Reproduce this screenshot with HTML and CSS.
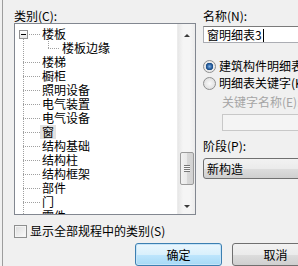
FILE: index.html
```html
<!DOCTYPE html>
<html lang="zh-CN">
<head>
    <meta charset="UTF-8">
    <meta name="viewport" content="width=device-width, initial-scale=1.0">
    <title>新建明细表</title>
    <link rel="stylesheet" href="styles.css">
</head>
<body>
    <div class="dialog">
        <div class="top">
            <div class="col-left">
                <div class="label">类别(C):</div>
                <div class="listbox">
                    <div class="tree">
                        <div class="node"><span class="conn root"><span class="expander"></span></span><span class="text">楼板</span></div>
                        <div class="node"><span class="conn pass"></span><span class="conn sub"></span><span class="text">楼板边缘</span></div>
                        <div class="node"><span class="conn"></span><span class="text">楼梯</span></div>
                        <div class="node"><span class="conn"></span><span class="text">橱柜</span></div>
                        <div class="node"><span class="conn"></span><span class="text">照明设备</span></div>
                        <div class="node"><span class="conn"></span><span class="text">电气装置</span></div>
                        <div class="node"><span class="conn"></span><span class="text">电气设备</span></div>
                        <div class="node"><span class="conn"></span><span class="text selected">窗</span></div>
                        <div class="node"><span class="conn"></span><span class="text">结构基础</span></div>
                        <div class="node"><span class="conn"></span><span class="text">结构柱</span></div>
                        <div class="node"><span class="conn"></span><span class="text">结构框架</span></div>
                        <div class="node"><span class="conn"></span><span class="text">部件</span></div>
                        <div class="node"><span class="conn"></span><span class="text">门</span></div>
                        <div class="node"><span class="conn"></span><span class="text">零件</span></div>
                    </div>
                    <div class="vscroll">
                        <div class="arrow"><span class="tri-up"></span></div>
                        <div class="track"><div class="thumb"><span class="grip"></span></div></div>
                        <div class="arrow"><span class="tri-down"></span></div>
                    </div>
                </div>
            </div>
            <div class="col-right">
                <div class="label">名称(N):</div>
                <div class="textbox">窗明细表3<span class="caret"></span></div>
                <div class="radio-row first"><span class="radio checked"></span><span>建筑构件明细表</span></div>
                <div class="radio-row"><span class="radio"></span><span>明细表关键字(K)</span></div>
                <div class="label disabled indent">关键字名称(E):</div>
                <div class="textbox off indent"></div>
                <div class="label phase">阶段(P):</div>
                <div class="combo">新构造</div>
            </div>
        </div>
        <div class="check-row"><span class="checkbox"></span><span>显示全部规程中的类别(S)</span></div>
        <div class="buttons">
            <div class="btn default">确定</div>
            <div class="btn">取消</div>
        </div>
    </div>
</body>
</html>
```

FILE: styles.css
```css
html, body {
    margin: 0;
    height: 100%;
    overflow: hidden;
}
body {
    background-color: #f0f0f0;
    font-family: "Noto Sans CJK SC", "Liberation Sans", sans-serif;
    font-size: 12px;
    line-height: 14px;
    color: #000;
}
.dialog {
    width: 360px;
    height: 100%;
    margin-left: 2px;
    border-left: 1px solid #9d9d9d;
    padding: 9px 0 0 11px;
    box-sizing: border-box;
}
.top {
    display: flex;
    gap: 7px;
}
.col-left {
    width: 182px;
    flex: none;
}
.col-right {
    width: 160px;
    flex: none;
    white-space: nowrap;
}
.label {
    height: 14px;
    white-space: nowrap;
}
.listbox {
    display: flex;
    height: 192px;
    border: 1px solid #828790;
    background-color: #fff;
    box-sizing: border-box;
}
.tree {
    flex: 1;
    padding: 3px 0 0 8px;
    overflow: hidden;
}
.node {
    display: flex;
    height: 14px;
    white-space: nowrap;
}
.conn {
    width: 17px;
    height: 14px;
    flex: none;
    background:
        repeating-linear-gradient(to bottom, #a0a0a0 0 1px, transparent 1px 2px) 0 0 / 1px 100% no-repeat,
        repeating-linear-gradient(to right, #a0a0a0 0 1px, transparent 1px 2px) 0 7px / 100% 1px no-repeat;
}
.conn.root {
    background:
        repeating-linear-gradient(to bottom, #a0a0a0 0 1px, transparent 1px 2px) 0 8px / 1px 6px no-repeat,
        repeating-linear-gradient(to right, #a0a0a0 0 1px, transparent 1px 2px) 6px 7px / 11px 1px no-repeat;
}
.conn.pass {
    width: 25px;
    background: repeating-linear-gradient(to bottom, #a0a0a0 0 1px, transparent 1px 2px) 0 0 / 1px 100% no-repeat;
}
.conn.sub {
    width: 12px;
    background:
        repeating-linear-gradient(to bottom, #a0a0a0 0 1px, transparent 1px 2px) 0 0 / 1px 8px no-repeat,
        repeating-linear-gradient(to right, #a0a0a0 0 1px, transparent 1px 2px) 0 7px / 100% 1px no-repeat;
}
.expander {
    display: block;
    width: 9px;
    height: 9px;
    margin: 3px 0 0 -4px;
    box-sizing: border-box;
    border: 1px solid #919191;
    background: linear-gradient(#000, #000) center / 5px 1px no-repeat, linear-gradient(#fff, #e6e6e6);
}
.text {
    display: block;
    height: 14px;
    padding: 0 2px;
}
.text.selected {
    background-color: #e2e2e2;
}
.vscroll {
    width: 17px;
    flex: none;
    display: flex;
    flex-direction: column;
    background: linear-gradient(to right, #e7e7e7, #f5f5f5 30%, #f5f5f5 70%, #ececec);
    border-left: 1px solid #ececec;
}
.arrow {
    height: 20px;
    display: flex;
    align-items: center;
    justify-content: center;
}
.tri-up, .tri-down {
    width: 0;
    height: 0;
    border-left: 3px solid transparent;
    border-right: 3px solid transparent;
}
.tri-up {
    border-bottom: 3px solid #3a3a3a;
    margin-top: 2px;
}
.tri-down {
    border-top: 3px solid #3a3a3a;
    margin-top: 4px;
}
.track {
    flex: 1;
    padding: 108px 1px 0 2px;
}
.thumb {
    height: 33px;
    box-sizing: border-box;
    border: 1px solid #9a9a9a;
    border-radius: 2px;
    background: linear-gradient(to right, #f2f2f2, #e9e9e9 50%, #d8d8d8 51%, #d2d2d2);
    display: flex;
    align-items: center;
    justify-content: center;
}
.grip {
    width: 6px;
    height: 7px;
    background: repeating-linear-gradient(to bottom, #777 0 1px, #f7f7f7 1px 2px);
}
.textbox {
    height: 17px;
    margin-top: 3px;
    padding: 0 3px;
    border: 1px solid #abadb3;
    border-top-color: #7a7a7a;
    background-color: #fff;
    box-sizing: border-box;
    line-height: 15px;
}
.caret {
    display: inline-block;
    width: 1px;
    height: 13px;
    margin-left: 1px;
    vertical-align: -2px;
    background-color: #000;
}
.textbox.off {
    margin-top: 5px;
    background-color: #f4f4f4;
    border-color: #c8c8c8;
}
.radio-row {
    display: flex;
    align-items: center;
    gap: 3px;
    height: 14px;
    margin-top: 3px;
}
.radio-row.first {
    margin-top: 16px;
}
.radio {
    width: 13px;
    height: 13px;
    flex: none;
    box-sizing: border-box;
    border: 1px solid #8e8f8f;
    border-radius: 50%;
    background: radial-gradient(circle, #fafafa, #d7d7d7);
}
.radio.checked {
    background: radial-gradient(circle, #7fb4e8 0, #2a5d9b 2.5px, #174c87 3.5px, #e8e8e8 4px, #f6f6f6 100%);
}
.label.disabled {
    color: #a5a5a5;
    margin-top: 5px;
}
.indent {
    margin-left: 19px;
}
.label.phase {
    margin-top: 8px;
}
.combo {
    height: 21px;
    margin-top: 5px;
    padding: 0 3px;
    border: 1px solid #707070;
    border-radius: 3px;
    box-sizing: border-box;
    background: linear-gradient(#f2f2f2, #ebebeb 50%, #dddddd 51%, #cfcfcf);
    line-height: 19px;
}
.check-row {
    display: flex;
    align-items: center;
    gap: 3px;
    height: 14px;
    margin-top: 9px;
    white-space: nowrap;
}
.checkbox {
    width: 13px;
    height: 13px;
    box-sizing: border-box;
    border: 1px solid #8e8f8f;
    background: linear-gradient(135deg, #dcdcdc, #fbfbfb);
    box-shadow: inset 0 0 0 1px #f4f4f4;
}
.buttons {
    display: flex;
    gap: 10px;
    margin: 5px 0 0 121px;
}
.btn {
    width: 87px;
    height: 23px;
    flex: none;
    box-sizing: border-box;
    border: 1px solid #707070;
    border-radius: 3px;
    background: linear-gradient(#f2f2f2, #ebebeb 50%, #dddddd 51%, #cfcfcf);
    text-align: center;
    line-height: 21px;
}
.btn.default {
    border-color: #3c7fb1;
    background: linear-gradient(#eaf6fd, #d9f0fc 50%, #bee6fd 51%, #a7d9f5);
    box-shadow: inset 0 0 0 1px #c6e4f8;
}
```
